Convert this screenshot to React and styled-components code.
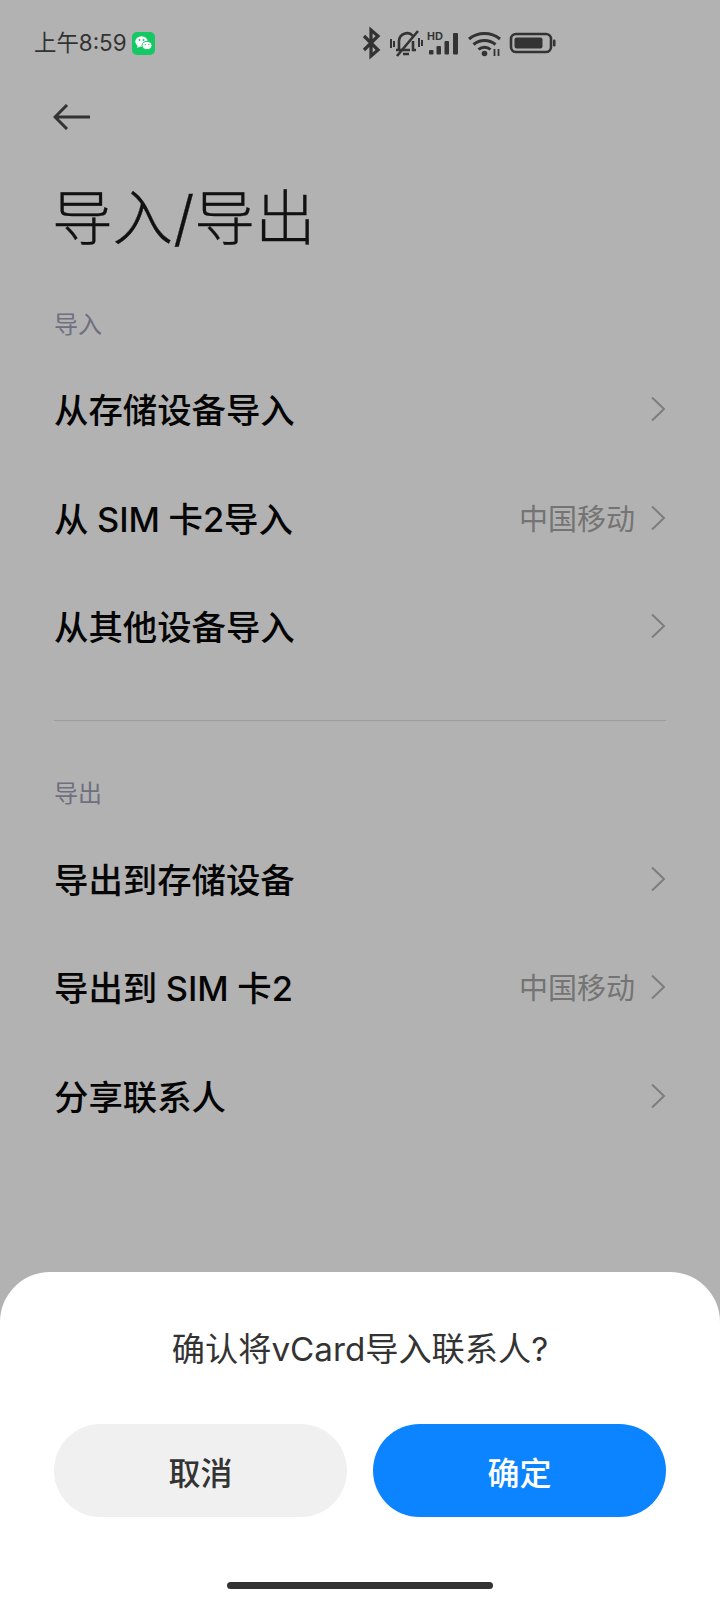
import React from "react";
import styled, { createGlobalStyle } from "styled-components";

const FONT = `Inter, "Noto Sans CJK SC", "Noto Sans", sans-serif`;

const Global = createGlobalStyle`
  html, body { margin: 0; padding: 0; background: #b2b2b2; }
  * { box-sizing: border-box; }
`;

const Page = styled.div`
  position: relative;
  width: 720px;
  height: 1600px;
  overflow: hidden;
  background: #b2b2b2;
  font-family: ${FONT};
  display: flex;
  flex-direction: column;
`;

const StatusBar = styled.div`
  height: 86px;
  padding: 0 0 0 34px;
  display: flex;
  align-items: center;
  color: #333;
`;

const Time = styled.span`
  font-size: 22.4px;
  line-height: 30px;
  width: 98px;
  white-space: pre;
`;

const AppBadge = styled.svg`
  width: 23px;
  height: 23px;
  display: block;
`;

const StatusIcons = styled.svg`
  width: 200px;
  height: 34px;
  margin-left: 206px;
  display: block;
`;

const BackRow = styled.div`
  height: 60px;
  padding: 2px 0 0 53px;
  display: flex;
  align-items: center;
`;

const Title = styled.h1`
  margin: 32px 0 0;
  padding-left: 52px;
  font-size: 60.6px;
  line-height: 80px;
  font-weight: 300;
  -webkit-text-stroke: 0.3px #111;
  color: #111;
  height: 80px;
`;

const SectionLabel = styled.div`
  padding-left: 54px;
  font-size: 24px;
  line-height: 32px;
  color: #6f6f80;
  margin-top: ${(p) => p.$top}px;
`;

const List = styled.div`
  display: flex;
  flex-direction: column;
  margin-top: ${(p) => p.$top}px;
`;

const Row = styled.div`
  height: 108.5px;
  padding: 0 54px;
  display: flex;
  align-items: center;
`;

const RowLabel = styled.span`
  flex: 1;
  font-size: 34.4px;
  font-weight: 500;
  word-spacing: -0.6px;
  color: #050505;
  white-space: pre;
`;

const RowValue = styled.span`
  font-size: 29px;
  color: #747474;
  margin-right: 15px;
`;

const Chevron = styled.svg`
  width: 16px;
  height: 26px;
  margin-top: 2px;
  display: block;
`;

const Divider = styled.div`
  height: 1px;
  margin: 40px 54px 0;
  background: #9d9d9d;
`;

const Sheet = styled.div`
  position: absolute;
  left: 0;
  right: 0;
  bottom: 0;
  height: 328px;
  background: #fff;
  border-radius: 50px 50px 0 0;
  display: flex;
  flex-direction: column;
  align-items: center;
`;

const SheetText = styled.div`
  margin-top: 55px;
  height: 44px;
  font-size: 33.2px;
  line-height: 44px;
  color: #333;
`;

const Buttons = styled.div`
  width: 100%;
  margin-top: 53px;
  padding: 0 54px;
  display: grid;
  grid-template-columns: 293px 293px;
  column-gap: 26px;
`;

const SheetButton = styled.div`
  height: 93px;
  border-radius: 47px;
  display: flex;
  align-items: center;
  justify-content: center;
  font-size: 32px;
  font-weight: 500;
  background: ${(p) => (p.$primary ? "#0d84ff" : "#f0f0f0")};
  color: ${(p) => (p.$primary ? "#fff" : "#333")};
`;

const HomeBar = styled.div`
  width: 266px;
  height: 7px;
  margin-top: 65px;
  border-radius: 4px;
  background: #333;
`;

const ChevronIcon = () => (
  <Chevron viewBox="0 0 16 26">
    <path d="M2 1.5 L14 13 L2 24.5" fill="none" stroke="#7d7d7d" strokeWidth="2" />
  </Chevron>
);

const ListRow = ({ label, value }) => (
  <Row>
    <RowLabel>{label}</RowLabel>
    {value && <RowValue>{value}</RowValue>}
    <ChevronIcon />
  </Row>
);

export default function App() {
  return (
    <Page>
      <Global />
      <StatusBar>
        <Time>上午8:59</Time>
        <AppBadge viewBox="0 0 23 23">
          <rect width="23" height="23" rx="5" fill="#14c864" />
          <ellipse cx="9.5" cy="9.5" rx="6.2" ry="5.2" fill="#fff" />
          <path d="M6 13l-1 3 3-1.6z" fill="#fff" />
          <ellipse cx="15" cy="13.5" rx="5" ry="4.2" fill="#fff" stroke="#14c864" strokeWidth="1" />
          <circle cx="7.5" cy="8" r=".9" fill="#14c864" />
          <circle cx="11.5" cy="8" r=".9" fill="#14c864" />
          <circle cx="13.3" cy="12.6" r=".7" fill="#14c864" />
          <circle cx="16.8" cy="12.6" r=".7" fill="#14c864" />
        </AppBadge>
        <StatusIcons viewBox="0 0 200 34">
          <path d="M3 10l14 14-7 6V4l7 6L3 24" fill="none" stroke="#333" strokeWidth="3.2" />
          <path d="M38 24V15a8 8 0 0 1 14-5M52 15v9h3M35 24h14M42 28h6" fill="none" stroke="#333" strokeWidth="2.6" />
          <path d="M36 30L57 5" stroke="#333" strokeWidth="2.6" />
          <path d="M30 13v9M33 15v6M58 12v9M61 14v6" stroke="#333" strokeWidth="2" />
          <text x="66" y="14" fontFamily="Liberation Sans" fontSize="11" fontWeight="700" fill="#333">HD</text>
          <rect x="68" y="24" width="4.500" height="4.500" rx="1" fill="#333" />
          <rect x="75.500" y="20" width="4.500" height="8.500" rx="1" fill="#333" />
          <rect x="83.500" y="15" width="4.500" height="13.500" rx="1" fill="#333" />
          <rect x="92" y="7" width="5" height="21.500" rx="1" fill="#333" />
          <path d="M108 13a25 25 0 0 1 31 0M112.500 18.500a17.500 17.500 0 0 1 22 0M117.500 23.500a9 9 0 0 1 12 0" fill="none" stroke="#333" strokeWidth="3" />
          <circle cx="123.500" cy="27.500" r="2.800" fill="#333" />
          <path d="M133.500 23v7M137.500 23v7" stroke="#333" strokeWidth="1.800" />
          <rect x="150" y="8" width="40" height="18" rx="5" fill="none" stroke="#333" strokeWidth="2.600" />
          <rect x="153.500" y="11.500" width="28" height="11" rx="2" fill="#333" />
          <rect x="192" y="13.500" width="2.500" height="7" rx="1.200" fill="#333" />
        </StatusIcons>
      </StatusBar>
      <BackRow>
        <svg width="38" height="26" viewBox="0 0 38 26">
          <path d="M37 13H2M14 1L2 13l12 12" fill="none" stroke="#333" strokeWidth="3" />
        </svg>
      </BackRow>
      <Title>导入/导出</Title>
      <SectionLabel $top={51}>导入</SectionLabel>
      <List $top={13}>
        <ListRow label="从存储设备导入" />
        <ListRow label="从 SIM 卡2导入" value="中国移动" />
        <ListRow label="从其他设备导入" />
      </List>
      <Divider />
      <SectionLabel $top={57}>导出</SectionLabel>
      <List $top={14}>
        <ListRow label="导出到存储设备" />
        <ListRow label="导出到 SIM 卡2" value="中国移动" />
        <ListRow label="分享联系人" />
      </List>
      <Sheet>
        <SheetText>确认将vCard导入联系人?</SheetText>
        <Buttons>
          <SheetButton>取消</SheetButton>
          <SheetButton $primary>确定</SheetButton>
        </Buttons>
        <HomeBar />
      </Sheet>
    </Page>
  );
}
